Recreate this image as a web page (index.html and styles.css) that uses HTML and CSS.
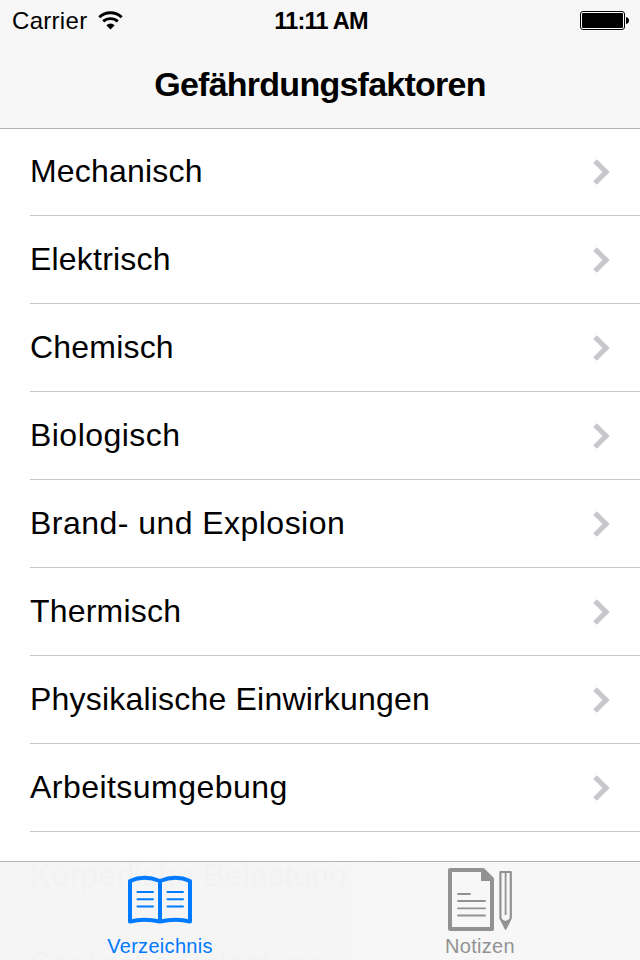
FILE: index.html
```html
<!DOCTYPE html>
<html lang="de">
<head>
  <meta charset="UTF-8"/>
  <meta name="viewport" content="width=device-width, initial-scale=1.0"/>
  <title>Gefährdungsfaktoren</title>
  <link rel="stylesheet" href="styles.css">
</head>
<body>
  <header class="header">
    <div class="status-bar">
      <div class="carrier">
        <span class="carrier-name">Carrier</span>
        <svg class="wifi" width="26" height="20" viewBox="0 0 26 20">
          <path d="M1.3 6.2 A16.2 16.2 0 0 1 23.7 6.2" fill="none" stroke="#000" stroke-width="2.9"/>
          <path d="M5.2 10.4 A10.8 10.8 0 0 1 19.8 10.4" fill="none" stroke="#000" stroke-width="2.8"/>
          <path d="M8.3 14.2 A6.6 6.6 0 0 1 16.7 14.2 L12.5 18.4 Z"/>
        </svg>
      </div>
      <span class="time">11:11 AM</span>
      <svg class="battery" width="50" height="20" viewBox="0 0 50 20">
        <rect x="0.5" y="0.5" width="44" height="18" rx="2.5" fill="#fff" stroke="#000"/>
        <rect x="2" y="2" width="41" height="15" rx="1"/>
        <path d="M46 6 Q49 6.5 49 9.5 Q49 12.5 46 13 Z"/>
      </svg>
    </div>
    <h1>Gefährdungsfaktoren</h1>
  </header>

  <ul class="list">
    <li>Mechanisch</li>
    <li>Elektrisch</li>
    <li>Chemisch</li>
    <li class="wide">Biologisch</li>
    <li class="wide">Brand- und Explosion</li>
    <li>Thermisch</li>
    <li>Physikalische Einwirkungen</li>
    <li class="wide">Arbeitsumgebung</li>
    <li>Körperliche Belastung</li>
    <li>Seelische Belastung</li>
  </ul>

  <nav class="tab-bar">
    <a class="tab active">
      <svg class="book" width="66" height="52" viewBox="0 0 66 52" fill="none" stroke="currentColor">
        <path d="M3 7 Q17 0.5 33 7 Q49 0.5 63 7 V47.5 Q49 44 33 47.5 Q17 44 3 47.5 Z M33 6 V47" stroke-width="4" stroke-linejoin="round"/>
        <path d="M10.5 18 H26 M10.5 25.3 H26 M10.5 32.5 H26 M40.5 18 H56 M40.5 25.3 H56 M40.5 32.5 H56" stroke-width="2" stroke-linecap="round"/>
      </svg>
      <span>Verzeichnis</span>
    </a>
    <a class="tab">
      <svg class="notes" width="66" height="66" viewBox="0 0 66 66" fill="none" stroke="currentColor">
        <path d="M3 3 H36 L45 12 V62 H3 Z" stroke-width="4" stroke-linejoin="round"/>
        <path d="M34 2 L46 14 H34 Z" fill="currentColor" stroke="none"/>
        <path d="M11 27 H23 M11 34 H38 M11 41.3 H38 M11 48.5 H38" stroke-width="1.8" stroke-linecap="round"/>
        <path d="M53.4 5 H63.8 V51 L58.6 61.5 L53.4 51 Z" stroke-width="2.2" stroke-linejoin="round"/>
        <path d="M58.6 6 V48" stroke-width="1.8"/>
        <path d="M54 52 L58.6 54 L63 52 L58.6 63 Z" fill="currentColor" stroke="none"/>
      </svg>
      <span>Notizen</span>
    </a>
  </nav>
</body>
</html>
```
FILE: styles.css
```css
* { box-sizing: border-box; }
html, body { height: 100%; margin: 0; padding: 0; }
body {
  display: flex;
  flex-direction: column;
  background: #fff;
  color: #000;
  font-family: "Liberation Sans", Arial, sans-serif;
  overflow: hidden;
}

.header {
  position: relative; z-index: 1;
  flex: none;
  height: 129px;
  background: #f7f7f7;
  border-bottom: 1px solid #b2b2b2;
}
.status-bar {
  height: 40px;
  padding: 1px 10px 0 12px;
  display: grid;
  grid-template-columns: 1fr auto 1fr;
  align-items: center;
  font-size: 24px;
}
.carrier { display: flex; align-items: center; gap: 11px; }
.carrier-name { letter-spacing: 0.3px; }
.time { padding-top: 2px; font-size: 23.5px; font-weight: bold; letter-spacing: -0.75px; }
.battery { justify-self: end; }
h1 {
  margin: 0;
  height: 88px;
  line-height: 89px;
  font-size: 34px;
  letter-spacing: -0.75px;
  text-align: center;
}

.list {
  flex: 1;
  min-height: 0;
  margin: -1px 0 0;
  padding: 0 0 0 30px;
  list-style: none;
  overflow: hidden;
}
.list li {
  height: 88px;
  display: flex;
  align-items: center;
  justify-content: space-between;
  padding-right: 34px;
  border-bottom: 1px solid #c8c7cc;
  font-size: 32px;
  letter-spacing: 0.2px;
}
.list .wide { letter-spacing: 0.46px; }
.list li::after {
  content: '';
  box-sizing: border-box;
  width: 17.6px;
  height: 17.6px;
  margin-top: 1px;
  border: solid #c7c7cc;
  border-width: 5px 5px 0 0;
  transform: rotate(45deg);
}

/* translucent bar on top of the list */
.tab-bar {
  position: absolute;
  left: 0; right: 0; bottom: 0;
  height: 99px;
  display: flex;
  background: linear-gradient(90deg, rgba(245,245,245,0.988) 50%, rgba(247,247,247,0.988) 62%);
  border-top: 1px solid #b2b2b2;
}
.tab {
  flex: 1;
  display: flex;
  flex-direction: column;
  align-items: center;
  justify-content: flex-end;
  padding-bottom: 2px;
  color: #929292;
  font-size: 20px;
  letter-spacing: 0.3px;
}
.tab.active { color: #007aff; }
.book { margin-bottom: 9px; }
.notes { margin-bottom: 2px; }
```
